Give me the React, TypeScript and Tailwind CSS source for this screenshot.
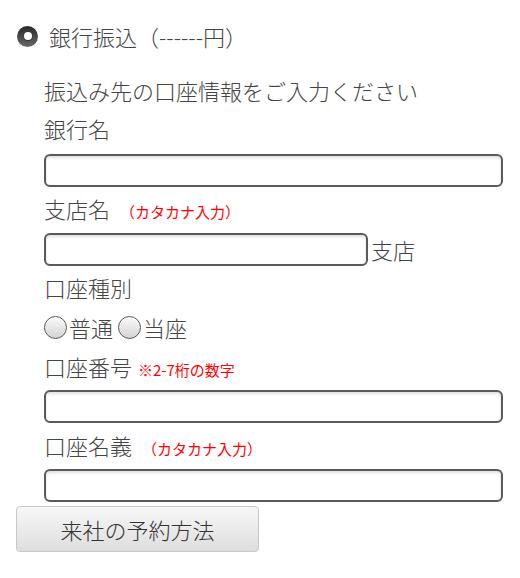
import React from 'react';

const font = { fontFamily: '"Noto Sans CJK JP", "Noto Sans", sans-serif' };

function TextBox({ className = '' }: { className?: string }) {
  return (
    <input
      type="text"
      className={`block h-[33px] rounded-[6px] border-2 border-[#5a5a5a] bg-white shadow-[inset_0_2px_3px_rgba(0,0,0,0.12)] outline-none ${className}`}
    />
  );
}

function Radio() {
  return (
    <span className="inline-block h-[23px] w-[23px] rounded-full border-[1.5px] border-[#555] bg-gradient-to-b from-[#fafafa] to-[#d4d4d4] shadow-[inset_0_1px_1px_rgba(255,255,255,0.9)]" />
  );
}

function Label({ text, note, bold }: { text: string; note?: string; bold?: boolean }) {
  return (
    <div className="flex h-[38px] items-baseline pt-[1px] text-[22px] font-light leading-[32px] text-[#444]">
      <span>{text}</span>
      {note && (
        <span
          className={`text-[15px] text-[#ff0000] ${bold ? 'ml-[6px] font-normal' : 'ml-[10px] font-normal'}`}
        >
          {note}
        </span>
      )}
    </div>
  );
}

export default function App() {
  return (
    <div className="h-[578px] w-[520px] bg-white" style={font}>
      <div className="flex h-[62px] items-center pl-[17px] pt-[16px] pb-[6px] text-[22px] font-light text-[#444]">
        <span className="mr-[11px] flex h-[21px] w-[21px] items-center justify-center rounded-full bg-gradient-to-b from-[#2a2a2a] to-[#6a6a6a]">
          <span className="h-[8px] w-[8px] rounded-full bg-white shadow-[0_1px_1px_rgba(0,0,0,0.4)]" />
        </span>
        銀行振込（------円）
      </div>

      <div className="pl-[44px] pr-[17px]">
        <div className="mt-[11px]">
          <Label text="振込み先の口座情報をご入力ください" />
        </div>
        <Label text="銀行名" />
        <TextBox className="mt-[5px] w-[459px]" />

        <div className="mt-[4px]">
          <Label text="支店名" note="（カタカナ入力）" />
        </div>
        <div className="mt-[4px] flex items-center">
          <TextBox className="h-[32px] w-[324px]" />
          <span className="ml-[3px] text-[22px] font-light text-[#444]">支店</span>
        </div>

        <div className="mt-[4px]">
          <Label text="口座種別" />
        </div>
        <div className="mt-[1px] flex h-[38px] items-center pb-[2px] text-[22px] font-light text-[#444]">
          <Radio />
          <span className="ml-[2px] mr-[5px]">普通</span>
          <Radio />
          <span className="ml-[2px]">当座</span>
        </div>

        <div className="mt-[2px]">
          <Label text="口座番号" note="※2-7桁の数字" bold />
        </div>
        <TextBox className="mt-[3px] w-[459px]" />

        <div className="mt-[5px]">
          <Label text="口座名義" note="（カタカナ入力）" />
        </div>
        <TextBox className="mt-[3px] h-[32px] w-[459px]" />
      </div>

      <div className="pl-[16px] pt-[4px]">
        <button
          type="button"
          className="h-[46px] w-[243px] rounded-[4px] border border-[#c8c8c8] bg-gradient-to-b from-[#f7f7f7] to-[#dedede] text-[22px] font-light text-[#333]"
        >
          来社の予約方法
        </button>
      </div>
    </div>
  );
}
